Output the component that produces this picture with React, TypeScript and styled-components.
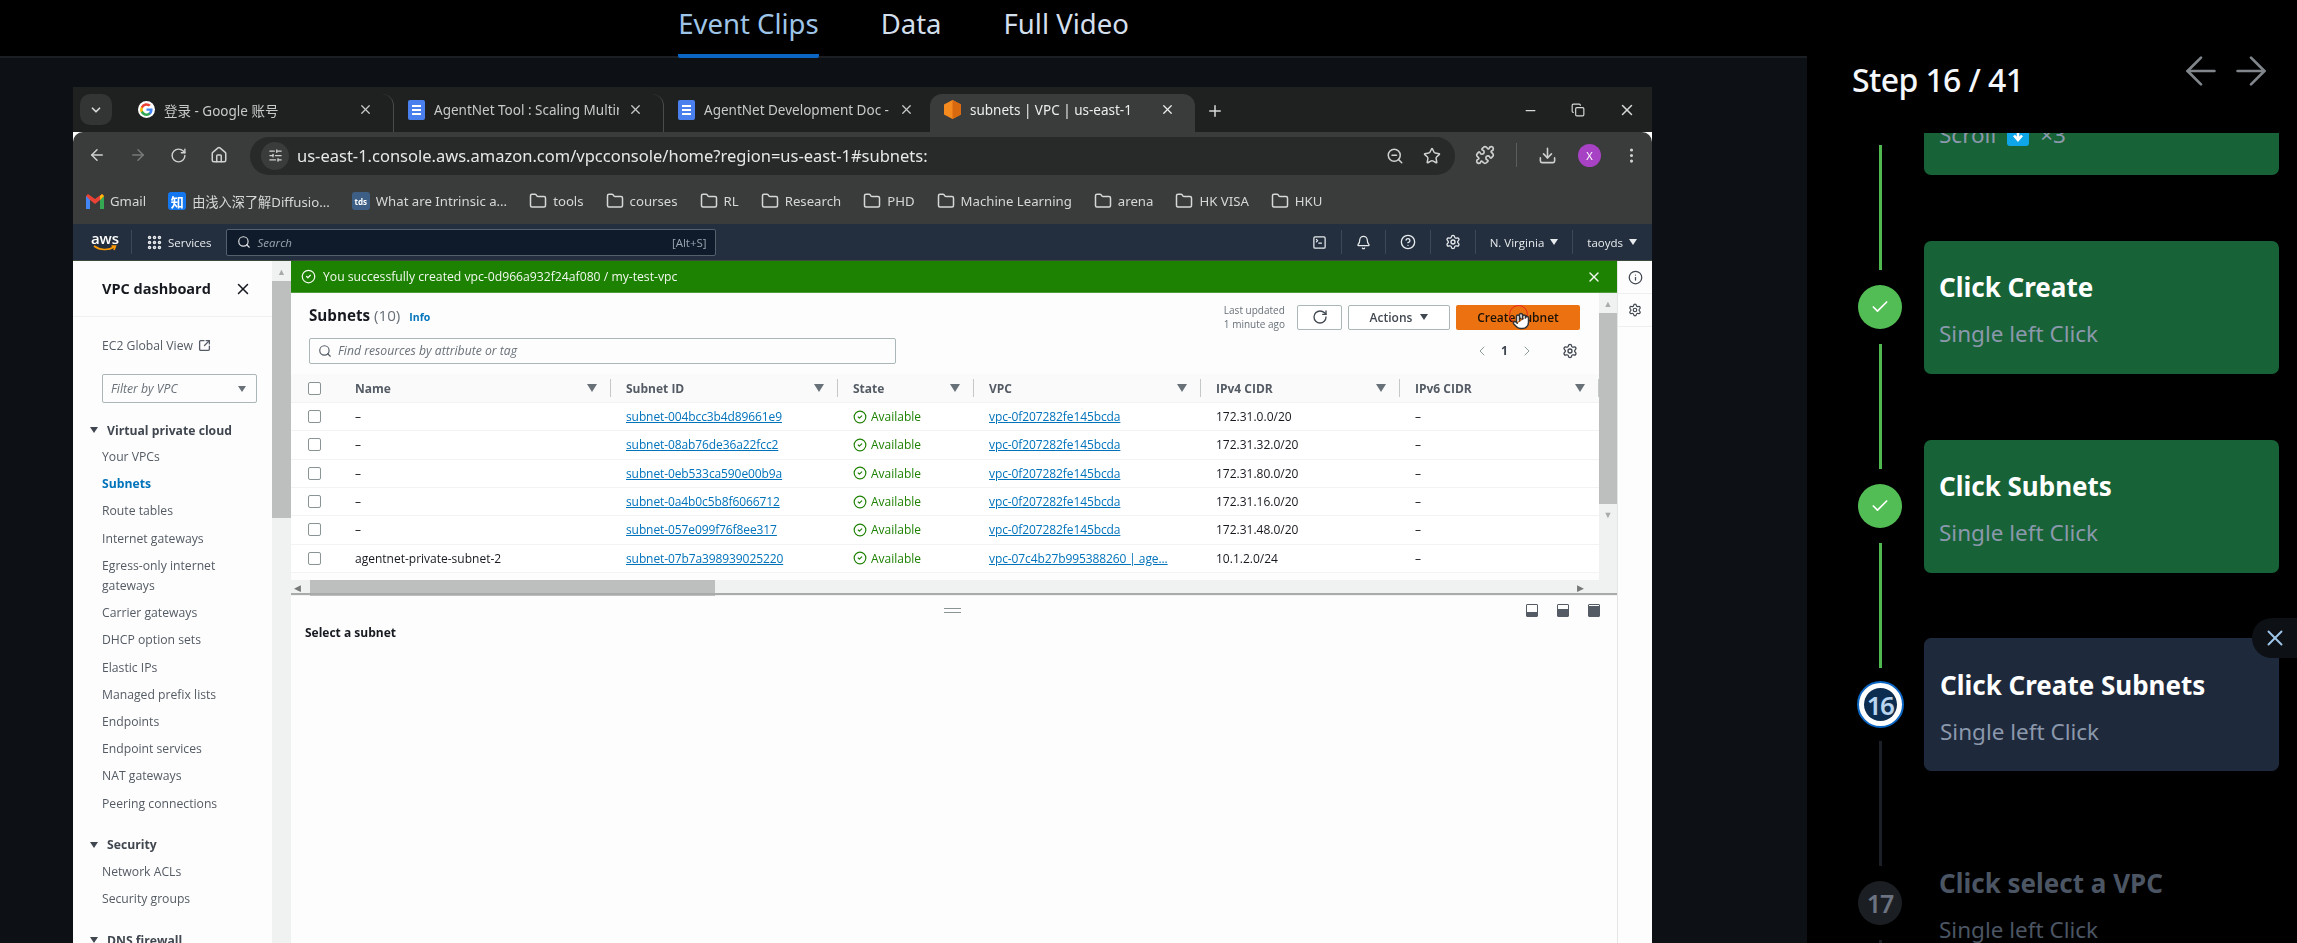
import styled, { createGlobalStyle } from 'styled-components';
import {
  ArrowLeft,
  ArrowRight,
  Bell,
  Check,
  ChevronDown,
  ChevronLeft,
  ChevronRight,
  CircleCheck,
  CircleHelp,
  Copy,
  Download,
  EllipsisVertical,
  Folder,
  Grip,
  Hand,
  House,
  Info,
  Minus,
  Plus,
  Puzzle,
  RotateCw,
  Search,
  Settings,
  SlidersHorizontal,
  SquareArrowOutUpRight,
  SquareTerminal,
  Star,
  X,
  ZoomOut,
} from 'lucide-react';

const UI_FONT = `'Noto Sans', 'Noto Sans CJK SC', sans-serif`;
const AWS_FONT = `'Open Sans', 'Noto Sans', sans-serif`;

const TABS = [
  { title: '登录 - Google 账号', icon: 'google' },
  { title: 'AgentNet Tool : Scaling Multimo', icon: 'docs' },
  { title: 'AgentNet Development Doc - G', icon: 'docs' },
];

const BOOKMARKS = ['tools', 'courses', 'RL', 'Research', 'PHD', 'Machine Learning', 'arena', 'HK VISA', 'HKU'];

const NAV_TOP = ['Your VPCs', 'Subnets', 'Route tables', 'Internet gateways', 'Egress-only internet gateways', 'Carrier gateways', 'DHCP option sets', 'Elastic IPs', 'Managed prefix lists', 'Endpoints', 'Endpoint services', 'NAT gateways', 'Peering connections'];

const COLUMNS = ['Name', 'Subnet ID', 'State', 'VPC', 'IPv4 CIDR', 'IPv6 CIDR'];

const ROWS = [
  { name: '–', id: 'subnet-004bcc3b4d89661e9', vpc: 'vpc-0f207282fe145bcda', cidr: '172.31.0.0/20' },
  { name: '–', id: 'subnet-08ab76de36a22fcc2', vpc: 'vpc-0f207282fe145bcda', cidr: '172.31.32.0/20' },
  { name: '–', id: 'subnet-0eb533ca590e00b9a', vpc: 'vpc-0f207282fe145bcda', cidr: '172.31.80.0/20' },
  { name: '–', id: 'subnet-0a4b0c5b8f6066712', vpc: 'vpc-0f207282fe145bcda', cidr: '172.31.16.0/20' },
  { name: '–', id: 'subnet-057e099f76f8ee317', vpc: 'vpc-0f207282fe145bcda', cidr: '172.31.48.0/20' },
  { name: 'agentnet-private-subnet-2', id: 'subnet-07b7a398939025220', vpc: 'vpc-07c4b27b995388260 | age...', cidr: '10.1.2.0/24' },
];

const GlobalStyle = createGlobalStyle`
  html, body {
    margin: 0;
    background: #000;
    overflow: hidden;
  }
  * {
    box-sizing: border-box;
  }
`;

const Page = styled.div`
  width: 2297px;
  height: 943px;
  display: grid;
  grid-template-columns: 1807px 490px;
  overflow: hidden;
  font-family: ${UI_FONT};
`;

const VideoPane = styled.div`
  background: #0d1014;
  min-width: 0;
  overflow: hidden;
`;

const TopTabs = styled.div`
  height: 58px;
  background: #000;
  border-bottom: 2px solid #1b1e22;
  display: flex;
  justify-content: center;
  gap: 62px;
  padding-left: 0;
  margin-right: 0;
`;

const TopTab = styled.div<{ $active?: boolean }>`
  height: 58px;
  padding-top: 1px;
  font-size: 27.5px;
  line-height: 46px;
  color: ${({ $active }) => ($active ? '#9ec5e8' : '#d3dfec')};
  border-bottom: ${({ $active }) => ($active ? '4px solid #0a66c2' : '4px solid transparent')};
  border-radius: 0 0 2px 2px;
`;

const Frame = styled.div`
  width: 1579px;
  margin: 29px 0 0 73px;
  height: 856px;
  overflow: hidden;
  background: #fff;
  display: flex;
  flex-direction: column;
  filter: blur(0.3px);
`;

const TabStrip = styled.div`
  height: 45px;
  background: #1f2020;
  display: flex;
  align-items: flex-end;
  padding-left: 7px;
  color: #d6d8d8;
  font-size: 13.5px;
  flex: none;
`;

const CollapseButton = styled.div`
  width: 32px;
  height: 31px;
  margin-bottom: 7px;
  border-radius: 10px;
  background: #333434;
  display: flex;
  align-items: center;
  justify-content: center;
  flex: none;
  margin-right: 12px;
`;

const BrowserTab = styled.div<{ $active?: boolean; $divider?: boolean }>`
  width: ${({ $active }) => ($active ? '265px' : '270px')};
  height: ${({ $active }) => ($active ? '38px' : '38px')};
  padding: 0 12px 7px 14px;
  display: flex;
  align-items: center;
  gap: 9px;
  flex: none;
  margin-left: ${({ $active }) => ($active ? '-4px' : '0')};
  border-radius: 12px 12px 0 0;
  background: ${({ $active }) => ($active ? '#3a3b3b' : 'transparent')};
  border-right: ${({ $divider }) => ($divider ? '1px solid #4a4b4b' : 'none')};
  color: ${({ $active }) => ($active ? '#eceded' : '#c8caca')};
`;

const TabTitle = styled.span`
  flex: 1;
  white-space: nowrap;
  overflow: hidden;
  font-size: 13.5px;
`;

const TabClose = styled(X)`
  margin-right: 8px;
  flex: none;
`;

const NewTab = styled(Plus)`
  margin: 0 0 12px 11px;
  flex: none;
`;

const WindowControls = styled.div`
  margin-left: auto;
  display: flex;
  align-items: center;
  gap: 33px;
  padding: 0 16px 13px 0;
`;

const Toolbar = styled.div`
  height: 46px;
  background: #3a3b3b;
  border-radius: 10px 10px 0 0;
  display: flex;
  align-items: center;
  padding: 0 16px 0 15px;
  color: #cfd1d1;
  flex: none;
`;

const ToolButtons = styled.div`
  display: flex;
  align-items: center;
  gap: 23px;
  width: 162px;
  flex: none;
`;

const AddressBar = styled.div`
  width: 1205px;
  height: 38px;
  margin-top: 1px;
  border-radius: 19px;
  background: #282929;
  display: flex;
  align-items: center;
  padding: 0 14px 0 11px;
  gap: 8px;
  flex: none;
`;

const SiteInfo = styled.div`
  width: 28px;
  height: 28px;
  border-radius: 50%;
  background: #3a3b3b;
  display: flex;
  align-items: center;
  justify-content: center;
  flex: none;
`;

const Url = styled.div`
  flex: 1;
  font-size: 16.5px;
  color: #e6e8e8;
  white-space: nowrap;
`;

const AddressIcons = styled.div`
  display: flex;
  gap: 19px;
  align-items: center;
`;

const ToolRight = styled.div`
  display: flex;
  align-items: center;
  margin-left: 20px;
  gap: 21px;
`;

const ToolDivider = styled.div`
  width: 1px;
  height: 24px;
  background: #5c5d5d;
`;

const Avatar = styled.div`
  width: 23px;
  height: 23px;
  border-radius: 50%;
  background: #a742c4;
  color: #fff;
  font-size: 11px;
  display: flex;
  align-items: center;
  justify-content: center;
`;

const BookmarkBar = styled.div`
  height: 46px;
  background: #3a3b3b;
  display: flex;
  align-items: center;
  padding: 0 0 0 13px;
  gap: 22px;
  color: #d6d8d8;
  font-size: 13.2px;
  flex: none;
`;

const Bookmark = styled.div`
  display: flex;
  align-items: center;
  gap: 6px;
  white-space: nowrap;
`;

const FaviconSquare = styled.span<{ $bg: string; $size?: number }>`
  width: 18px;
  height: 18px;
  border-radius: 3px;
  background: ${({ $bg }) => $bg};
  color: #fff;
  font-size: ${({ $size }) => $size ?? 13}px;
  font-weight: 700;
  display: inline-flex;
  align-items: center;
  justify-content: center;
`;

const AwsNav = styled.div`
  height: 37px;
  background: #232f3e;
  border-bottom: 1px solid #3b4a3d;
  display: flex;
  align-items: center;
  padding-left: 20px;
  color: #e8ebee;
  font-family: ${AWS_FONT};
  font-size: 11.5px;
  flex: none;
`;

const AwsLogo = styled.div`
  width: 24px;
  display: flex;
  flex-direction: column;
  align-items: center;
  color: #fff;
  font-size: 15px;
  font-weight: 600;
  line-height: 13px;
`;

const NavSep = styled.div<{ $gap?: number }>`
  width: 1px;
  height: 24px;
  background: #3b4857;
  margin: 0 ${({ $gap }) => $gap ?? 14}px;
  flex: none;
`;

const Services = styled.div`
  display: flex;
  align-items: center;
  gap: 5px;
  margin-right: 14px;
`;

const AwsSearch = styled.div`
  width: 490px;
  height: 27px;
  border-radius: 2px;
  border: 1px solid #56606c;
  background: #0f1b2a;
  color: #9aa5b1;
  display: flex;
  align-items: center;
  padding: 0 8px 0 10px;
  gap: 7px;
`;

const SearchWord = styled.span`
  flex: 1;
  font-style: italic;
`;

const NavRight = styled.div`
  margin-left: auto;
  display: flex;
  align-items: center;
  padding-right: 15px;
`;

const Caret = styled.span`
  width: 0;
  height: 0;
  display: inline-block;
  margin-left: 6px;
  border-left: 4px solid transparent;
  border-right: 4px solid transparent;
  border-top: 6px solid currentColor;
`;

const ConsoleBody = styled.div`
  flex: 1;
  min-height: 0;
  display: grid;
  grid-template-columns: 199px 19px 1326px 35px;
  background: #fdfdfd;
  color: #16191f;
  font-family: ${AWS_FONT};
`;

const Sidebar = styled.nav`
  overflow: hidden;
  background: #fdfdfd;
`;

const SideHead = styled.div`
  height: 56px;
  padding: 0 20px 0 29px;
  border-bottom: 1px solid #f0f1f1;
  display: flex;
  align-items: center;
  justify-content: space-between;
  font-size: 14.5px;
  font-weight: 700;
  color: #16191f;
`;

const GlobalLink = styled.div`
  margin: 18px 0 0 29px;
  height: 20px;
  display: flex;
  align-items: center;
  gap: 5px;
  font-size: 12.2px;
  color: #545b64;
`;

const VpcFilter = styled.div`
  width: 155px;
  height: 29px;
  margin: 19px 0 0 29px;
  border: 1px solid #aab7b8;
  border-radius: 2px;
  padding: 0 10px 0 8px;
  font-size: 12.2px;
  font-style: italic;
  color: #687078;
  display: flex;
  align-items: center;
  justify-content: space-between;
`;

const NavGroup = styled.div<{ $first?: boolean }>`
  margin: ${({ $first }) => ($first ? '17px' : '21px')} 0 0 11px;
  height: 20px;
  display: flex;
  align-items: center;
  gap: 9px;
  font-size: 12.2px;
  font-weight: 700;
  color: #414750;
`;

const NavList = styled.div`
  display: flex;
  flex-direction: column;
  margin-top: 7px;
  padding: 0 0 0 29px;
  gap: 7px;
`;

const NavItem = styled.div<{ $active?: boolean }>`
  font-size: 12.2px;
  line-height: 20.2px;
  max-width: 135px;
  color: ${({ $active }) => ($active ? '#0073bb' : '#545b64')};
  font-weight: ${({ $active }) => ($active ? 700 : 400)};
`;

const ScrollTrack = styled.div`
  background: #f0f1f1;
  display: flex;
  flex-direction: column;
  align-items: center;
  color: #a9abab;
  font-size: 9px;
  overflow: hidden;
`;

const ScrollArrow = styled.div`
  height: 20px;
  width: 100%;
  display: flex;
  align-items: center;
  justify-content: center;
  flex: none;
`;

const ScrollThumb = styled.div<{ $height: number }>`
  width: 100%;
  height: ${({ $height }) => $height}px;
  background: #bdbfbe;
  flex: none;
`;

const Main = styled.main`
  display: flex;
  flex-direction: column;
  min-width: 0;
`;

const Flash = styled.div`
  height: 32px;
  background: #1d8102;
  color: #f2f8ef;
  border-bottom: 1px solid #4f9a3c;
  display: flex;
  align-items: center;
  justify-content: space-between;
  padding: 0 15px 0 10px;
  font-size: 12.2px;
  flex: none;
`;

const FlashText = styled.div`
  display: flex;
  align-items: center;
  gap: 7px;
`;

const UpperPanel = styled.div`
  height: 300px;
  display: grid;
  grid-template-columns: 1308px 18px;
  flex: none;
`;

const TableArea = styled.div`
  display: flex;
  flex-direction: column;
  min-width: 0;
`;

const TitleRow = styled.div`
  height: 35px;
  padding: 10px 19px 0 18px;
  display: flex;
  align-items: flex-start;
  justify-content: space-between;
`;

const PanelTitle = styled.div`
  display: flex;
  align-items: baseline;
  gap: 7px;
  font-size: 15.2px;
  font-weight: 700;
  line-height: 24px;
`;

const Count = styled.span`
  font-weight: 400;
  color: #687078;
`;

const InfoLink = styled.span`
  font-size: 10.5px;
  font-weight: 700;
  color: #0073bb;
  margin-left: 2px;
`;

const Actions = styled.div`
  display: flex;
  align-items: center;
  gap: 6px;
`;

const Updated = styled.div`
  font-size: 10px;
  line-height: 14px;
  color: #687078;
  margin-right: 6px;
  white-space: nowrap;
`;

const GhostButton = styled.div<{ $width: number }>`
  width: ${({ $width }) => $width}px;
  height: 25px;
  border: 1px solid #aab7b8;
  border-radius: 2px;
  background: #fff;
  color: #414750;
  font-size: 12px;
  font-weight: 600;
  display: flex;
  align-items: center;
  justify-content: center;
  gap: 2px;
`;

const PrimaryButton = styled.div`
  position: relative;
  width: 124px;
  height: 25px;
  border-radius: 2px;
  background: #ec7211;
  color: #1c1208;
  font-size: 12px;
  font-weight: 600;
  display: flex;
  align-items: center;
  justify-content: center;
`;

const ClickRing = styled.div`
  position: absolute;
  left: 53px;
  top: 0;
  width: 19px;
  height: 19px;
  border: 1.5px solid #e8261c;
  border-radius: 50%;
`;

const Pointer = styled(Hand)`
  position: absolute;
  left: 56px;
  top: 7px;
  fill: #fff;
`;

const FilterRow = styled.div`
  height: 46px;
  padding: 9px 21px 10px 18px;
  display: flex;
  align-items: center;
  justify-content: space-between;
`;

const SearchInput = styled.div`
  width: 587px;
  height: 26px;
  border: 1px solid #aab7b8;
  border-radius: 2px;
  padding: 0 8px;
  display: flex;
  align-items: center;
  gap: 6px;
  font-size: 12.2px;
  font-style: italic;
  color: #687078;
`;

const Pager = styled.div`
  display: flex;
  align-items: center;
  font-size: 12.2px;
  font-weight: 700;
  color: #414750;
  gap: 11px;
`;

const PagerGear = styled(Settings)`
  margin-left: 16px;
`;

const TableRow = styled.div<{ $head?: boolean }>`
  height: ${({ $head }) => ($head ? '29px' : '28.33px')};
  display: grid;
  grid-template-columns: 48px 272px 227px 136px 227px 199px 199px;
  align-items: center;
  font-size: 12px;
  background: ${({ $head }) => ($head ? '#fafafa' : '#fff')};
  border-bottom: 1px solid #f2f3f3;
  color: ${({ $head }) => ($head ? '#545b64' : '#16191f')};
  font-weight: ${({ $head }) => ($head ? 700 : 400)};
  flex: none;
`;

const CheckCell = styled.div`
  display: flex;
  justify-content: flex-end;
  padding-right: 18px;
`;

const Checkbox = styled.div`
  width: 13px;
  height: 13px;
  border: 1px solid #8b9495;
  border-radius: 2px;
  background: #fff;
`;

const HeadCell = styled.div<{ $first?: boolean }>`
  display: flex;
  align-items: center;
  justify-content: space-between;
  height: 18px;
  padding: 0 13px 0 ${({ $first }) => ($first ? '16px' : '15px')};
  border-right: 1px solid #c4c8c8;
`;

const FilterCaret = styled.span`
  width: 0;
  height: 0;
  display: inline-block;
  border-left: 5px solid transparent;
  border-right: 5px solid transparent;
  border-top: 8px solid #687078;
`;

const Cell = styled.div<{ $first?: boolean }>`
  padding-left: ${({ $first }) => ($first ? '16px' : '15px')};
  white-space: nowrap;
`;

const LinkCell = styled(Cell)`
  color: #0073bb;
  text-decoration: underline;
  letter-spacing: -0.1px;
`;

const StateCell = styled(Cell)`
  display: flex;
  align-items: center;
  gap: 4px;
  color: #1d8102;
`;

const HScroll = styled.div`
  height: 16px;
  margin-top: 7px;
  background: #f0f1f1;
  display: flex;
  align-items: center;
  color: #777;
  flex: none;
`;

const HThumb = styled.div`
  width: 405px;
  height: 16px;
  margin-left: 6px;
  background: #bdbfbe;
`;

const HLeft = styled.span`
  width: 13px;
  text-align: center;
  font-size: 9px;
`;

const HRight = styled.span`
  margin-left: auto;
  width: 22px;
  font-size: 9px;
`;

const SplitBar = styled.div`
  height: 2px;
  background: #a9abab;
  flex: none;
`;

const LowerPanel = styled.div`
  flex: 1;
  padding: 8px 17px 0 14px;
`;

const ResizeRow = styled.div`
  display: grid;
  grid-template-columns: 1fr auto 1fr;
  align-items: center;
  height: 14px;
`;

const Grabber = styled.div`
  width: 17px;
  height: 5px;
  border-top: 1.5px solid #8b9495;
  border-bottom: 1.5px solid #8b9495;
`;

const PaneIcons = styled.div`
  display: flex;
  justify-content: flex-end;
  gap: 19px;
`;

const PaneIcon = styled.div<{ $fill: number }>`
  width: 12px;
  height: 13px;
  border: 1.5px solid #545b64;
  border-radius: 1px;
  display: flex;
  align-items: flex-end;

  &::after {
    content: '';
    width: 100%;
    height: ${({ $fill }) => $fill}%;
    background: #545b64;
  }
`;

const DetailHint = styled.div`
  margin-top: 7px;
  font-size: 12px;
  font-weight: 700;
  color: #16191f;
`;

const ToolRail = styled.div`
  border-left: 1px solid #e4e6e6;
  background: #fdfdfd;
  display: flex;
  flex-direction: column;
  align-items: center;
  color: #414750;
`;

const RailIcon = styled.div`
  height: 33px;
  width: 100%;
  border-bottom: 1px solid #eeefef;
  display: flex;
  align-items: center;
  justify-content: center;
`;

const StepsPane = styled.aside`
  position: relative;
  background: #000;
  display: flex;
  flex-direction: column;
  overflow: hidden;
`;

const StepsHeader = styled.div`
  height: 133px;
  padding: 52px 23px 0 45px;
  display: flex;
  justify-content: space-between;
  align-items: flex-start;
  flex: none;
`;

const StepCounter = styled.div`
  color: #f4f7fb;
  font-size: 32px;
  font-weight: 500;
  line-height: 56px;
  margin-top: 0;
  letter-spacing: -0.6px;
`;

const Arrows = styled.div`
  display: flex;
  gap: 4px;
  color: #80868b;
  margin-top: -4px;
  margin-right: 0;
`;

const StepsList = styled.div`
  flex: 1;
  min-height: 0;
  overflow: hidden;
  padding: 0 18px 0 44px;
`;

const StepsInner = styled.div`
  margin-top: -124px;
`;

const StepRow = styled.div`
  height: 198.75px;
  display: grid;
  grid-template-columns: 58px 1fr;
  gap: 15px;
`;

const Track = styled.div`
  display: flex;
  flex-direction: column;
  align-items: center;
  gap: 15px;
`;

const Line = styled.div<{ $done?: boolean }>`
  flex: 1;
  width: 3px;
  background: ${({ $done }) => ($done ? '#4fb84f' : '#1b1f26')};
`;

const DoneDot = styled.div`
  width: 44px;
  height: 44px;
  border-radius: 50%;
  background: #52bd55;
  color: #fff;
  display: flex;
  align-items: center;
  justify-content: center;
  flex: none;
`;

const ActiveDot = styled.div`
  width: 47px;
  height: 47px;
  margin: -2px 0;
  border-radius: 50%;
  border: 2px solid #0a66c2;
  background: #fff;
  padding: 5px;
  flex: none;
`;

const ActiveInner = styled.div`
  width: 100%;
  height: 100%;
  border-radius: 50%;
  background: #0c2d4f;
  color: #b8d4ee;
  font-size: 26px;
  font-weight: 600;
  letter-spacing: -1.5px;
  display: flex;
  align-items: center;
  justify-content: center;
`;

const PendingDot = styled.div`
  width: 44px;
  height: 44px;
  border-radius: 50%;
  background: #1b1f24;
  color: #6b7280;
  font-size: 25px;
  font-weight: 600;
  letter-spacing: -1px;
  display: flex;
  align-items: center;
  justify-content: center;
  flex: none;
`;

const StepCard = styled.div<{ $state: 'done' | 'active' | 'pending' }>`
  height: 133px;
  margin-top: 33px;
  border-radius: 7px;
  padding: 0 15px;
  background: ${({ $state }) =>
    $state === 'done' ? '#176337' : $state === 'active' ? '#1e293b' : 'transparent'};
  border: ${({ $state }) => ($state === 'active' ? '1px solid #1e2a40' : 'none')};
`;

const StepTitle = styled.div<{ $muted?: boolean }>`
  margin-top: 27px;
  font-size: 26px;
  font-weight: 700;
  line-height: 38px;
  white-space: nowrap;
  color: ${({ $muted }) => ($muted ? '#4b5563' : '#fff')};
`;

const StepSub = styled.div<{ $muted?: boolean }>`
  margin-top: 12px;
  font-size: 22.5px;
  line-height: 32px;
  display: flex;
  align-items: center;
  gap: 11px;
  color: ${({ $muted }) => ($muted ? '#4b5563' : '#8b98ac')};
`;

const KeyBadge = styled.span`
  width: 22px;
  height: 22px;
  background: #0ea5e9;
  border-radius: 3px;
  color: #fff;
  display: inline-flex;
  align-items: center;
  justify-content: center;
`;

const CloseTab = styled.div`
  position: absolute;
  right: 0;
  top: 618px;
  width: 45px;
  height: 40px;
  border-radius: 20px 0 0 20px;
  background: #0d1014;
  color: #9ec5e8;
  display: flex;
  align-items: center;
  justify-content: center;
`;

const GoogleIcon = () => (
  <svg width="17" height="17" viewBox="0 0 24 24">
    <circle cx="12" cy="12" r="12" fill="#fff" />
    <path d="M20.6 12.2c0-.6-.1-1.200-.2-1.700H12v3.300h4.800a4.100 4.100 0 0 1-1.800 2.700v2.200h2.900c1.700-1.600 2.700-3.900 2.700-6.500z" fill="#4285f4" />
    <path d="M12 21c2.400 0 4.500-.8 5.900-2.200L15 16.600c-.8.500-1.800.9-3 .9-2.300 0-4.300-1.600-5-3.700H4v2.300A9 9 0 0 0 12 21z" fill="#34a853" />
    <path d="M7 13.800a5.400 5.400 0 0 1 0-3.500V8H4a9 9 0 0 0 0 8.100l3-2.300z" fill="#fbbc05" />
    <path d="M12 6.600c1.300 0 2.500.5 3.400 1.300L18 5.400A9 9 0 0 0 4 8l3 2.300c.7-2.100 2.700-3.700 5-3.700z" fill="#ea4335" />
  </svg>
);

const DocsIcon = () => (
  <svg width="17" height="20" viewBox="0 0 17 20">
    <rect width="17" height="20" rx="2" fill="#4a80ee" />
    <path d="M4 6h9M4 10h9M4 14h9" stroke="#fff" strokeWidth="1.800" />
  </svg>
);

const CubeIcon = () => (
  <svg width="17" height="19" viewBox="0 0 17 19">
    <path d="M8.500 0 17 4.500v10L8.500 19 0 14.500v-10z" fill="#f58a1f" />
    <path d="M8.500 0 17 4.500v10L8.500 19z" fill="#d9690f" />
  </svg>
);

const GmailIcon = () => (
  <svg width="18" height="15" viewBox="0 0 18 15">
    <path d="M0 2v13h4V6l5 4 5-4v9h4V2l-2-2-7 5-7-5z" fill="#ea4335" />
    <path d="M0 2v13h4V6z" fill="#4285f4" />
    <path d="M14 6v9h4V2z" fill="#34a853" />
    <path d="M16 0l2 2-4 4V2z" fill="#fbbc05" />
  </svg>
);

const Smile = () => (
  <svg width="24" height="7" viewBox="0 0 24 7">
    <path d="M1 1c6 4.500 15 4.500 20 1M18.500 1h4l-1.500 4" fill="none" stroke="#f90" strokeWidth="1.600" />
  </svg>
);

const TAB_ICON: Record<string, React.ReactNode> = {
  google: <GoogleIcon />,
  docs: <DocsIcon />,
};

export default function App() {
  return (
    <Page>
      <GlobalStyle />
      <VideoPane>
        <TopTabs>
          <TopTab $active>Event Clips</TopTab>
          <TopTab>Data</TopTab>
          <TopTab>Full Video</TopTab>
        </TopTabs>
        <Frame>
          <TabStrip>
            <CollapseButton>
              <ChevronDown size={14} strokeWidth={3} />
            </CollapseButton>
            {TABS.map((tab, i) => (
              <BrowserTab key={tab.title} $divider={i < 2}>
                {TAB_ICON[tab.icon]}
                <TabTitle>{tab.title}</TabTitle>
                <TabClose size={15} />
              </BrowserTab>
            ))}
            <BrowserTab $active>
              <CubeIcon />
              <TabTitle>subnets | VPC | us-east-1</TabTitle>
              <TabClose size={15} />
            </BrowserTab>
            <NewTab size={18} />
            <WindowControls>
              <Minus size={15} />
              <Copy size={14} />
              <X size={18} />
            </WindowControls>
          </TabStrip>
          <Toolbar>
            <ToolButtons>
              <ArrowLeft size={18} />
              <ArrowRight size={18} color="#77797a" />
              <RotateCw size={17} />
              <House size={18} />
            </ToolButtons>
            <AddressBar>
              <SiteInfo>
                <SlidersHorizontal size={15} />
              </SiteInfo>
              <Url>us-east-1.console.aws.amazon.com/vpcconsole/home?region=us-east-1#subnets:</Url>
              <AddressIcons>
                <ZoomOut size={18} />
                <Star size={18} />
              </AddressIcons>
            </AddressBar>
            <ToolRight>
              <Puzzle size={20} />
              <ToolDivider />
              <Download size={19} />
              <Avatar>X</Avatar>
              <EllipsisVertical size={19} />
            </ToolRight>
          </Toolbar>
          <BookmarkBar>
            <Bookmark>
              <GmailIcon />
              Gmail
            </Bookmark>
            <Bookmark>
              <FaviconSquare $bg="#1577f0">知</FaviconSquare>
              由浅入深了解Diffusio...
            </Bookmark>
            <Bookmark>
              <FaviconSquare $bg="#3d5f86" $size={8}>tds</FaviconSquare>
              What are Intrinsic a...
            </Bookmark>
            {BOOKMARKS.map((label) => (
              <Bookmark key={label}>
                <Folder size={18} />
                {label}
              </Bookmark>
            ))}
          </BookmarkBar>
          <AwsNav>
            <AwsLogo>
              aws
              <Smile />
            </AwsLogo>
            <NavSep />
            <Services>
              <Grip size={17} strokeWidth={3} />
              Services
            </Services>
            <AwsSearch>
              <Search size={14} color="#dfe3e7" />
              <SearchWord>Search</SearchWord>
              [Alt+S]
            </AwsSearch>
            <NavRight>
              <SquareTerminal size={15} />
              <NavSep $gap={14} />
              <Bell size={15} />
              <NavSep $gap={14} />
              <CircleHelp size={16} />
              <NavSep $gap={14} />
              <Settings size={16} />
              <NavSep $gap={14} />
              N. Virginia
              <Caret />
              <NavSep $gap={14} />
              taoyds
              <Caret />
            </NavRight>
          </AwsNav>
          <ConsoleBody>
            <Sidebar>
              <SideHead>
                VPC dashboard
                <X size={18} />
              </SideHead>
              <GlobalLink>
                EC2 Global View
                <SquareArrowOutUpRight size={13} strokeWidth={2.4} />
              </GlobalLink>
              <VpcFilter>
                Filter by VPC
                <Caret />
              </VpcFilter>
              <NavGroup $first>
                <Caret />
                Virtual private cloud
              </NavGroup>
              <NavList>
                {NAV_TOP.map((item) => (
                  <NavItem key={item} $active={item === 'Subnets'}>
                    {item}
                  </NavItem>
                ))}
              </NavList>
              <NavGroup>
                <Caret />
                Security
              </NavGroup>
              <NavList>
                <NavItem>Network ACLs</NavItem>
                <NavItem>Security groups</NavItem>
              </NavList>
              <NavGroup>
                <Caret />
                DNS firewall
              </NavGroup>
            </Sidebar>
            <ScrollTrack>
              <ScrollArrow>▲</ScrollArrow>
              <ScrollThumb $height={237} />
            </ScrollTrack>
            <Main>
              <Flash>
                <FlashText>
                  <CircleCheck size={15} />
                  You successfully created vpc-0d966a932f24af080 / my-test-vpc
                </FlashText>
                <X size={16} />
              </Flash>
              <UpperPanel>
                <TableArea>
                  <TitleRow>
                    <PanelTitle>
                      <span>
                        Subnets <Count>(10)</Count>
                      </span>
                      <InfoLink>Info</InfoLink>
                    </PanelTitle>
                    <Actions>
                      <Updated>
                        Last updated
                        <br />1 minute ago
                      </Updated>
                      <GhostButton $width={45}>
                        <RotateCw size={16} />
                      </GhostButton>
                      <GhostButton $width={102}>
                        Actions
                        <Caret />
                      </GhostButton>
                      <PrimaryButton>
                        Create subnet
                        <ClickRing />
                        <Pointer size={18} color="#333" />
                      </PrimaryButton>
                    </Actions>
                  </TitleRow>
                  <FilterRow>
                    <SearchInput>
                      <Search size={14} color="#545b64" />
                      Find resources by attribute or tag
                    </SearchInput>
                    <Pager>
                      <ChevronLeft size={16} strokeWidth={1.4} color="#879596" />
                      1
                      <ChevronRight size={16} strokeWidth={1.4} color="#879596" />
                      <PagerGear size={16} />
                    </Pager>
                  </FilterRow>
                  <TableRow $head>
                    <CheckCell>
                      <Checkbox />
                    </CheckCell>
                    {COLUMNS.map((column, i) => (
                      <HeadCell key={column} $first={i === 0}>
                        {column}
                        <FilterCaret />
                      </HeadCell>
                    ))}
                  </TableRow>
                  {ROWS.map((row) => (
                    <TableRow key={row.id}>
                      <CheckCell>
                        <Checkbox />
                      </CheckCell>
                      <Cell $first>{row.name}</Cell>
                      <LinkCell>{row.id}</LinkCell>
                      <StateCell>
                        <CircleCheck size={14} />
                        Available
                      </StateCell>
                      <LinkCell>{row.vpc}</LinkCell>
                      <Cell>{row.cidr}</Cell>
                      <Cell>–</Cell>
                    </TableRow>
                  ))}
                  <HScroll>
                    <HLeft>◀</HLeft>
                    <HThumb />
                    <HRight>▶</HRight>
                  </HScroll>
                </TableArea>
                <ScrollTrack>
                  <ScrollArrow>▲</ScrollArrow>
                  <ScrollThumb $height={191} />
                  <ScrollArrow>▼</ScrollArrow>
                </ScrollTrack>
              </UpperPanel>
              <SplitBar />
              <LowerPanel>
                <ResizeRow>
                  <span />
                  <Grabber />
                  <PaneIcons>
                    <PaneIcon $fill={35} />
                    <PaneIcon $fill={55} />
                    <PaneIcon $fill={85} />
                  </PaneIcons>
                </ResizeRow>
                <DetailHint>Select a subnet</DetailHint>
              </LowerPanel>
            </Main>
            <ToolRail>
              <RailIcon>
                <Info size={15} />
              </RailIcon>
              <RailIcon>
                <Settings size={14} />
              </RailIcon>
            </ToolRail>
          </ConsoleBody>
        </Frame>
      </VideoPane>
      <StepsPane>
        <StepsHeader>
          <StepCounter>Step 16 / 41</StepCounter>
          <Arrows>
            <ArrowLeft size={46} strokeWidth={1.4} />
            <ArrowRight size={46} strokeWidth={1.4} />
          </Arrows>
        </StepsHeader>
        <StepsList>
          <StepsInner>
            <StepRow>
              <Track>
                <Line $done />
                <DoneDot>
                  <Check size={20} />
                </DoneDot>
                <Line $done />
              </Track>
              <StepCard $state="done">
                <StepTitle>Scroll</StepTitle>
                <StepSub>
                  Scroll
                  <KeyBadge>
                    <ArrowDownGlyph />
                  </KeyBadge>
                  ×3
                </StepSub>
              </StepCard>
            </StepRow>
            <StepRow>
              <Track>
                <Line $done />
                <DoneDot>
                  <Check size={20} />
                </DoneDot>
                <Line $done />
              </Track>
              <StepCard $state="done">
                <StepTitle>Click Create</StepTitle>
                <StepSub>Single left Click</StepSub>
              </StepCard>
            </StepRow>
            <StepRow>
              <Track>
                <Line $done />
                <DoneDot>
                  <Check size={20} />
                </DoneDot>
                <Line $done />
              </Track>
              <StepCard $state="done">
                <StepTitle>Click Subnets</StepTitle>
                <StepSub>Single left Click</StepSub>
              </StepCard>
            </StepRow>
            <StepRow>
              <Track>
                <Line $done />
                <ActiveDot>
                  <ActiveInner>16</ActiveInner>
                </ActiveDot>
                <Line />
              </Track>
              <StepCard $state="active">
                <StepTitle>Click Create Subnets</StepTitle>
                <StepSub>Single left Click</StepSub>
              </StepCard>
            </StepRow>
            <StepRow>
              <Track>
                <Line />
                <PendingDot>17</PendingDot>
                <Line />
              </Track>
              <StepCard $state="pending">
                <StepTitle $muted>Click select a VPC</StepTitle>
                <StepSub $muted>Single left Click</StepSub>
              </StepCard>
            </StepRow>
          </StepsInner>
        </StepsList>
        <CloseTab>
          <X size={26} strokeWidth={1.8} />
        </CloseTab>
      </StepsPane>
    </Page>
  );
}

function ArrowDownGlyph() {
  return (
    <svg width="14" height="16" viewBox="0 0 14 16">
      <path d="M7 2v10M3 8.500 7 13l4-4.500" fill="none" stroke="#fff" strokeWidth="2.600" />
    </svg>
  );
}
